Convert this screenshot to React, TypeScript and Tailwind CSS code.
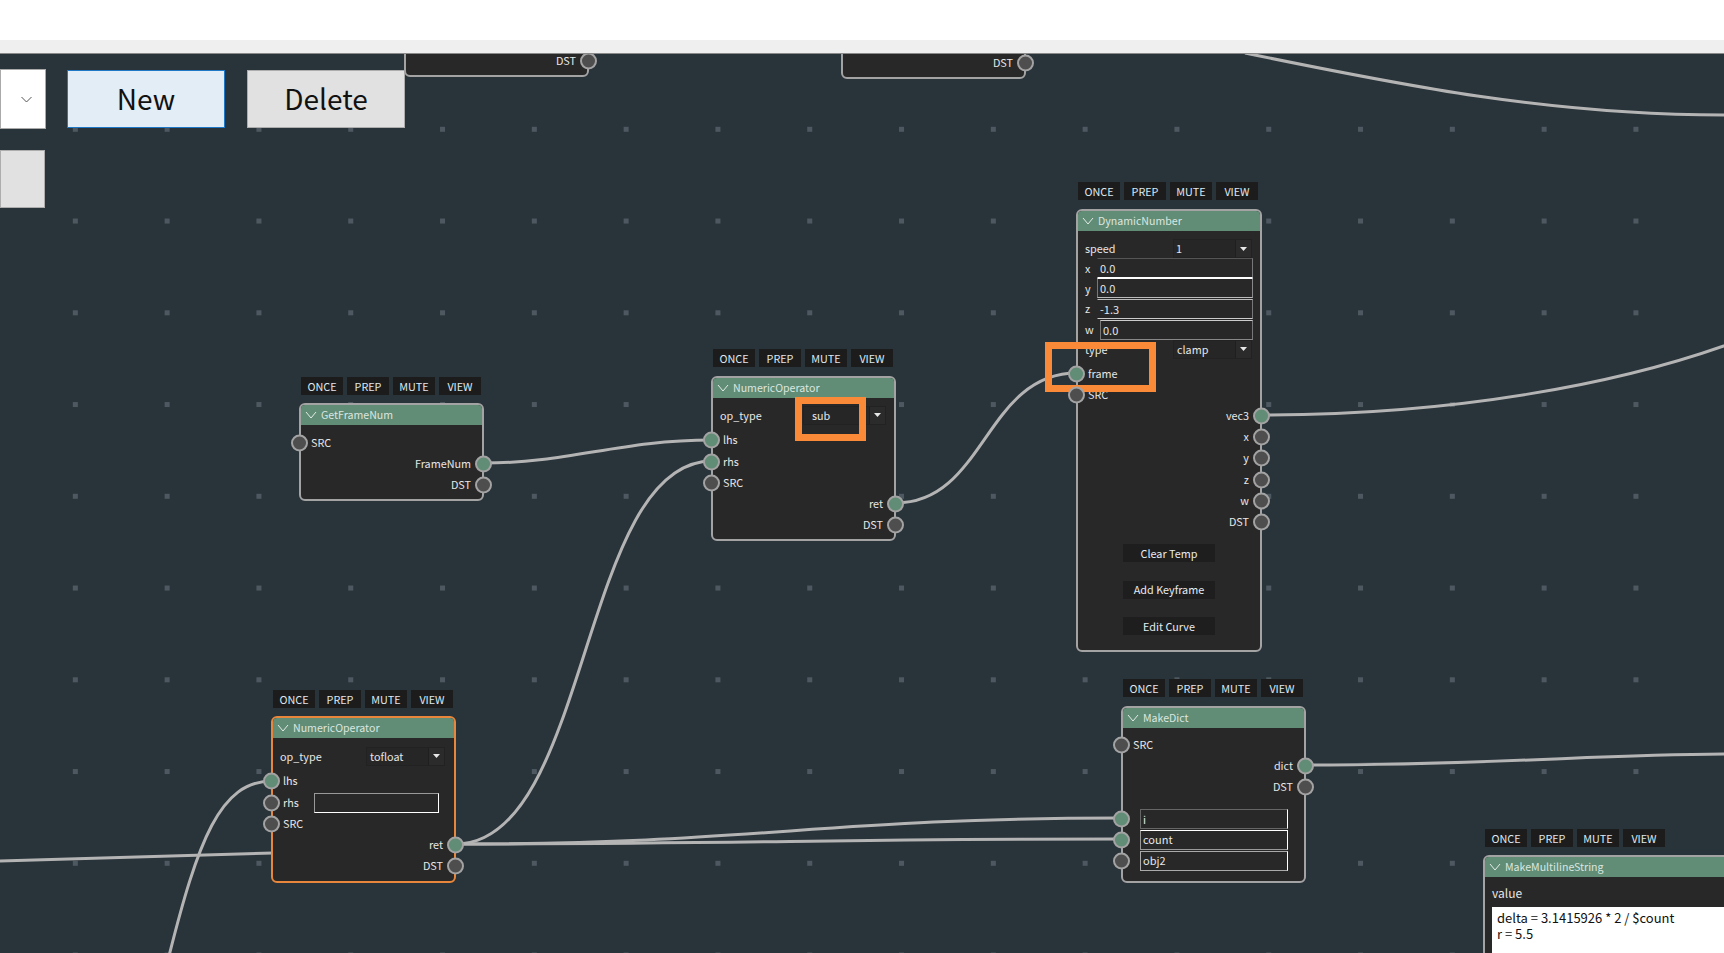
import type { ReactNode } from "react"

const edges = [
  "M484 409 C 570 409, 620 386, 712 386",
  "M456 790 C 590 790, 580 407, 712 407",
  "M896 449 C 985 449, 985 319, 1077 319",
  "M1261 361 C 1450 361, 1620 331, 1740 286",
  "M1306 711 C 1500 711, 1600 700, 1730 700",
  "M456 790 C 760 790, 820 764, 1122 764",
  "M456 790 C 760 790, 820 785, 1122 785",
  "M0 807 L 273 799",
  "M168 906 C 198 786, 220 727, 272 727",
  "M1245 -1 C 1400 31, 1550 61, 1724 61",
]

function Port({ side, on }: { side: "left" | "right"; on?: boolean }) {
  return (
    <span
      className={`absolute top-1/2 z-10 h-[17px] w-[17px] -translate-y-1/2 rounded-full border-2 border-[#a3a3a3] ${
        on ? "bg-[#618c75]" : "bg-[#4e4e4e]"
      } ${side === "left" ? "-left-[10px]" : "-right-[10px]"}`}
    />
  )
}

function Row({ label, side = "left", on, children }: { label: string; side?: "left" | "right"; on?: boolean; children?: ReactNode }) {
  return (
    <div className={`relative flex h-[21px] items-center ${side === "left" ? "pl-[10px]" : "justify-end pr-[11px]"}`}>
      <Port side={side} on={on} />
      <span className="leading-none">{label}</span>
      {children}
    </div>
  )
}

function Select({ value, className }: { value: string; className: string }) {
  return (
    <div className={`flex h-[19px] items-center justify-between border border-[#222222] bg-[#262626] pl-[3px] ${className}`}>
      <span>{value}</span>
      <span className="flex h-[17px] w-[16px] items-center justify-center bg-[#2b2b2b] border-l border-[#1f1f1f]">
        <svg width="7" height="4" viewBox="0 0 7 4">
          <polygon points="0,0 7,0 3.5,4" fill="#e8e8e8" />
        </svg>
      </span>
    </div>
  )
}

function Field({ value, className }: { value: string; className: string }) {
  return (
    <input
      readOnly
      value={value}
      className={`h-[20px] border bg-transparent px-[2px] text-[11px] text-[#e6e6e6] outline-none ${className}`}
    />
  )
}

function Node({
  title,
  className,
  accent,
  near,
  children,
}: {
  title: string
  className: string
  accent?: boolean
  near?: boolean
  children: ReactNode
}) {
  return (
    <div className={`absolute w-[185px] ${className}`}>
      <div className={`ml-[2px] flex h-[18px] gap-[4px] ${near ? "mb-[8px]" : "mb-[9px]"}`}>
        {["ONCE", "PREP", "MUTE", "VIEW"].map((b) => (
          <button key={b} className="h-[18px] w-[42px] bg-[#1c1c1c] leading-[18px] text-[#dfe7ef]">
            {b}
          </button>
        ))}
      </div>
      <div className={`rounded-[6px] border-2 bg-[#282828] ${accent ? "border-[#e8873c]" : "border-[#a3a3a3]"}`}>
        <div className="flex h-[20px] items-center gap-[4px] rounded-t-[4px] bg-[#618c75] pb-[1px] pl-[4px] text-[10.6px] text-[#dbe7e0]">
          <svg width="12" height="8" viewBox="0 0 12 8" fill="none" stroke="#e4ece8" strokeWidth="1">
            <polyline points="1,1 6,7 11,1" />
          </svg>
          <span>{title}</span>
        </div>
        {children}
      </div>
    </div>
  )
}

export default function App() {
  return (
    <div className="flex h-[953px] w-[1724px] flex-col overflow-hidden bg-white font-['Noto_Sans_CJK_JP',sans-serif] text-[10.8px] text-[#e6e6e6]">
      <div className="h-[40px] shrink-0 bg-white" />
      <div className="h-[13px] shrink-0 bg-[#efefef]" />
      <div className="h-[1px] shrink-0 bg-[#8a8a8a]" />

      <div className="relative flex-1 overflow-hidden bg-[#29333a]">
        <svg className="absolute inset-0 h-full w-full" fill="none">
          <defs>
            <pattern id="dots" x="0" y="0" width="91.8" height="91.75" patternUnits="userSpaceOnUse">
              <rect x="72.5" y="72.5" width="5" height="5" fill="#4d5860" shapeRendering="crispEdges" />
            </pattern>
          </defs>
          <rect width="100%" height="100%" fill="url(#dots)" />
          {edges.map((d) => (
            <path key={d} d={d} stroke="#b4b4b4" strokeWidth="3" />
          ))}
        </svg>

        {/* left controls */}
        <div className="absolute left-0 top-[15px] flex flex-col gap-[22px] text-[28px] leading-[40px] text-[#111111]">
          <div className="flex items-start">
            <div className="flex h-[60px] w-[46px] items-center justify-end border border-[#aaaaaa] bg-white pr-[13px]">
              <svg width="11" height="7" viewBox="0 0 11 7" fill="none" stroke="#555555" strokeWidth="1">
                <polyline points="0.5,1 5.5,6 10.5,1" />
              </svg>
            </div>
            <button className="ml-[21px] mt-[1px] h-[58px] w-[158px] border border-[#1f78c6] bg-[#e3edf6] pb-[2px]">New</button>
            <button className="ml-[22px] mt-[1px] h-[58px] w-[158px] border border-[#adadad] bg-[#e1e1e1] pb-[2px]">Delete</button>
          </div>
          <div className="-mt-[1px] h-[58px] w-[45px] border border-[#adadad] bg-[#e1e1e1]" />
        </div>

        {/* cut off by the top of the canvas */}
        <div className="absolute -top-[60px] left-[404px] h-[83px] w-[185px] rounded-[6px] border-2 border-[#a3a3a3] bg-[#282828]">
          <div className="absolute inset-x-0 bottom-[4px]">
            <Row label="DST" side="right" />
          </div>
        </div>
        <div className="absolute -top-[60px] left-[841px] h-[85px] w-[185px] rounded-[6px] border-2 border-[#a3a3a3] bg-[#282828]">
          <div className="absolute inset-x-0 bottom-[4px]">
            <Row label="DST" side="right" />
          </div>
        </div>

        <Node title="GetFrameNum" near className="left-[299px] top-[323px]">
          <div className="pb-[4px] pt-[7px]">
            <Row label="SRC" />
            <Row label="FrameNum" side="right" on />
            <Row label="DST" side="right" />
          </div>
        </Node>

        <Node title="NumericOperator" className="left-[711px] top-[295px]">
          <div className="pb-[4px] pt-[7px]">
            <div className="mb-[4px] flex h-[20px] items-center justify-between pl-[7px] pr-[8px]">
              <span>op_type</span>
              <Select value="sub" className="w-[83px] !pl-[8px]" />
            </div>
            <Row label="lhs" on />
            <div className="mt-[1px]">
              <Row label="rhs" on />
              <Row label="SRC" />
              <Row label="ret" side="right" on />
              <Row label="DST" side="right" />
            </div>
          </div>
        </Node>

        <Node title="DynamicNumber" className="left-[1076px] top-[128px] !w-[186px]">
          <div className="pb-[15px] pt-[8px]">
            <div className="flex h-[19px] items-center justify-between pl-[7px] pr-[8px]">
              <span>speed</span>
              <Select value="1" className="w-[79px] !pl-[2px]" />
            </div>
            <div className="flex flex-col pl-[7px] pr-[7px]">
              <div className="flex h-[20px] items-center justify-between">
                <span>x</span>
                <Field value="0.0" className="w-[156px] border-transparent border-t-[#555555] border-r-[#777777] border-b-white" />
              </div>
              <div className="flex h-[20px] items-center justify-between">
                <span>y</span>
                <Field value="0.0" className="w-[156px] border-[#777777] border-t-white border-r-[#888888] border-b-[#bbbbbb]" />
              </div>
              <div className="flex h-[21px] items-center justify-between">
                <span>z</span>
                <Field value="-1.3" className="w-[156px] border-transparent border-t-[#bbbbbb] border-r-[#777777] border-b-[#cccccc]" />
              </div>
              <div className="flex h-[21px] items-center justify-between">
                <span>w</span>
                <Field value="0.0" className="w-[153px] border-[#777777] border-t-[#cccccc] border-b-[#888888]" />
              </div>
            </div>
            <div className="flex h-[18px] items-center justify-between pl-[7px] pr-[8px]">
              <span>type</span>
              <Select value="clamp" className="w-[79px]" />
            </div>
            <div className="mt-[5px]">
              <Row label="frame" on />
              <Row label="SRC" />
              <Row label="vec3" side="right" on />
              <Row label="x" side="right" />
              <Row label="y" side="right" />
              <div className="mt-[1px]">
                <Row label="z" side="right" />
                <Row label="w" side="right" />
                <Row label="DST" side="right" />
              </div>
            </div>
            <div className="mt-[12px] flex flex-col items-center gap-[18.5px]">
              {["Clear Temp", "Add Keyframe", "Edit Curve"].map((b) => (
                <button key={b} className="h-[18px] w-[92px] bg-[#1e1e1e] text-[#e6ecf2]">
                  {b}
                </button>
              ))}
            </div>
          </div>
        </Node>

        <Node title="NumericOperator" accent near className="left-[271px] top-[636px]">
          <div className="pb-[5px] pt-[8px]">
            <div className="mb-[4px] flex h-[20px] items-center justify-between pl-[7px] pr-[9px]">
              <span>op_type</span>
              <Select value="tofloat" className="w-[79px]" />
            </div>
            <Row label="lhs" on />
            <div className="mt-[1px]">
              <Row label="rhs">
                <Field value="" className="ml-auto mr-[15px] w-[125px] border-[#999999] border-b-white border-r-white" />
              </Row>
              <Row label="SRC" />
              <Row label="ret" side="right" on />
              <Row label="DST" side="right" />
            </div>
          </div>
        </Node>

        <Node title="MakeDict" className="left-[1121px] top-[625px]">
          <div className="pb-[10px] pt-[6px]">
            <Row label="SRC" />
            <Row label="dict" side="right" on />
            <Row label="DST" side="right" />
            <div className="mt-[11px]">
              <div className="relative flex h-[21px] items-center pl-[17px]">
                <Port side="left" on />
                <Field value="i" className="w-[148px] border-[#666666] border-r-white" />
              </div>
              <div className="relative flex h-[21px] items-center pl-[17px]">
                <Port side="left" on />
                <Field value="count" className="w-[148px] border-[#999999] border-t-white border-r-white pb-[2px]" />
              </div>
              <div className="relative flex h-[21px] items-center pl-[17px]">
                <Port side="left" />
                <Field value="obj2" className="w-[148px] border-[#aaaaaa] border-r-white pb-[2px]" />
              </div>
            </div>
          </div>
        </Node>

        <Node title="MakeMultilineString" near className="left-[1483px] top-[775px] !w-[300px]">
          <div className="px-[7px] pt-[6px]">
            <div className="flex h-[20px] items-center text-[12px]">value</div>
            <div className="mt-[4px] h-[100px] bg-white px-[5px] py-[3px] text-[13px] leading-[16px] text-[#111111]">
              delta = 3.1415926 * 2 / $count
              <br />r = 5.5
            </div>
          </div>
        </Node>

        {/* highlights */}
        <div className="absolute left-[795px] top-[343px] h-[44px] w-[71px] border-[7px] border-[#fa8a37]" />
        <div className="absolute left-[1045px] top-[288px] h-[50px] w-[111px] border-[7px] border-[#fa8a37]" />
      </div>
    </div>
  )
}
